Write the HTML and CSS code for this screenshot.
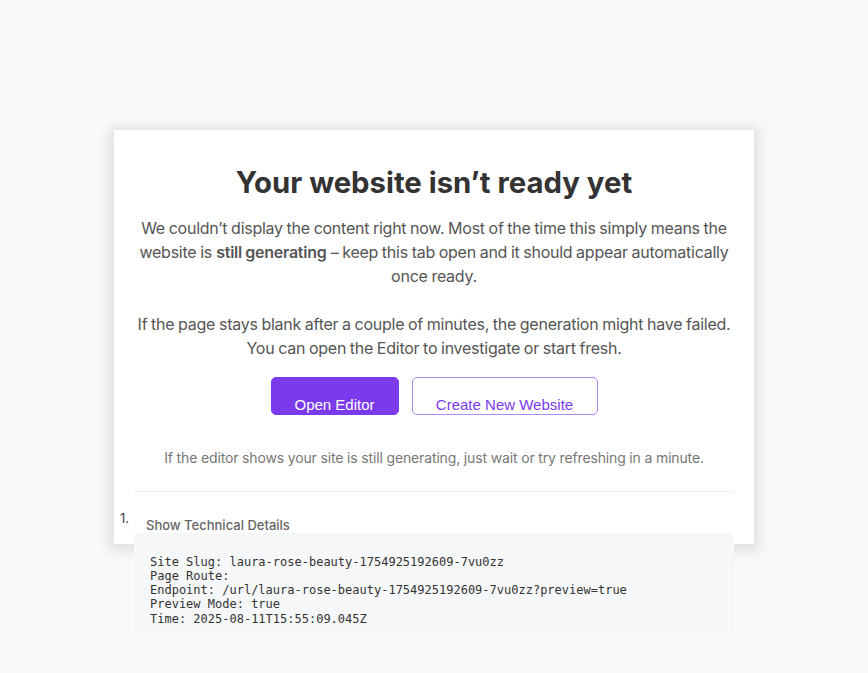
FILE: index.html
```html
<!DOCTYPE html>
<html lang="en">
<head>
    <meta charset="UTF-8">
    <meta name="viewport" content="width=device-width, initial-scale=1.0">
    <title>Website not ready</title>
    <link rel="stylesheet" href="styles.css">
</head>
<body>
    <div class="card">
        <h1>Your website isn’t ready yet</h1>
        <p class="lead">We couldn’t display the content right now. Most of the time this simply means the website is <strong>still generating</strong> – keep this tab open and it should appear automatically once ready.</p>
        <p class="lead">If the page stays blank after a couple of minutes, the generation might have failed. You can open the Editor to investigate or start fresh.</p>

        <div class="actions">
            <button class="btn btn-primary">Open Editor</button>
            <button class="btn btn-outline">Create New Website</button>
        </div>

        <p class="note">If the editor shows your site is still generating, just wait or try refreshing in a minute.</p>

        <div class="divider"></div>

        <div class="tech-row">
            <span class="num">1.</span>
            <div class="tech">
                <div class="tech-toggle">Show Technical Details</div>
                <pre class="tech-info">Site Slug: laura-rose-beauty-1754925192609-7vu0zz
Page Route: 
Endpoint: /url/laura-rose-beauty-1754925192609-7vu0zz?preview=true
Preview Mode: true
Time: 2025-08-11T15:55:09.045Z</pre>
            </div>
        </div>
    </div>
</body>
</html>
```

FILE: styles.css
```css
body {
    font-family: Inter, "Noto Sans", sans-serif;
    background-color: #f8f9fb;
    display: flex;
    justify-content: center;
    align-items: center;
    height: 100vh;
    margin: 0;
}
.card {
    width: 640px;
    height: 414px;
    box-sizing: border-box;
    padding: 36px 20px 0;
    background: #fff;
    box-shadow: 0 2px 12px 5px rgba(0, 0, 0, 0.1);
    text-align: center;
}
h1 {
    font-size: 29.3px;
    line-height: 34px;
    font-weight: 700;
    color: #333;
    margin: 0 0 16px;
}
.lead {
    font-size: 16px;
    line-height: 24px;
    color: #555;
    margin: 0 0 24px;
    word-spacing: -0.5px;
    letter-spacing: -0.25px;
}
.lead strong {
    font-weight: 600;
    padding: 0 0.5px;
}
.actions {
    display: flex;
    justify-content: center;
    gap: 13px;
    margin-top: -7px;
}
.btn {
    box-sizing: border-box;
    font-family: "Liberation Sans", Arial, sans-serif;
    font-size: 15px;
    line-height: 17px;
    height: 38px;
    padding: 18px 0 1px;
    border-radius: 5px;
    cursor: pointer;
}
.btn-primary {
    width: 128px;
    background-color: #7c3aed;
    border: 1px solid #7c3aed;
    color: #fff;
}
.btn-outline {
    width: 186px;
    background: #fff;
    border: 1px solid #a78bfa;
    color: #7c3aed;
}
.note {
    font-size: 14px;
    line-height: 20px;
    color: #777;
    margin: 33px 0 0;
    letter-spacing: -0.15px;
}
.divider {
    height: 1px;
    background: #eeeeee;
    margin-top: 23px;
}
.tech-row {
    display: flex;
    margin: 18px 0 0 -14px;
    text-align: left;
}
.num {
    width: 14px;
    flex-shrink: 0;
    font-size: 13px;
    line-height: 16px;
    color: #444;
}
.tech {
    flex: 1;
}
.tech-toggle {
    font-size: 13px;
    line-height: 16px;
    font-weight: 500;
    color: #666;
    padding: 7px 0 0 12px;
}
.tech-info {
    margin: 0;
    padding: 22px 16px 8px;
    background: #f6f7f9;
    border-radius: 4px;
    font-family: "DejaVu Sans Mono", monospace;
    font-size: 12px;
    line-height: 14.3px;
    color: #333;
}
```
